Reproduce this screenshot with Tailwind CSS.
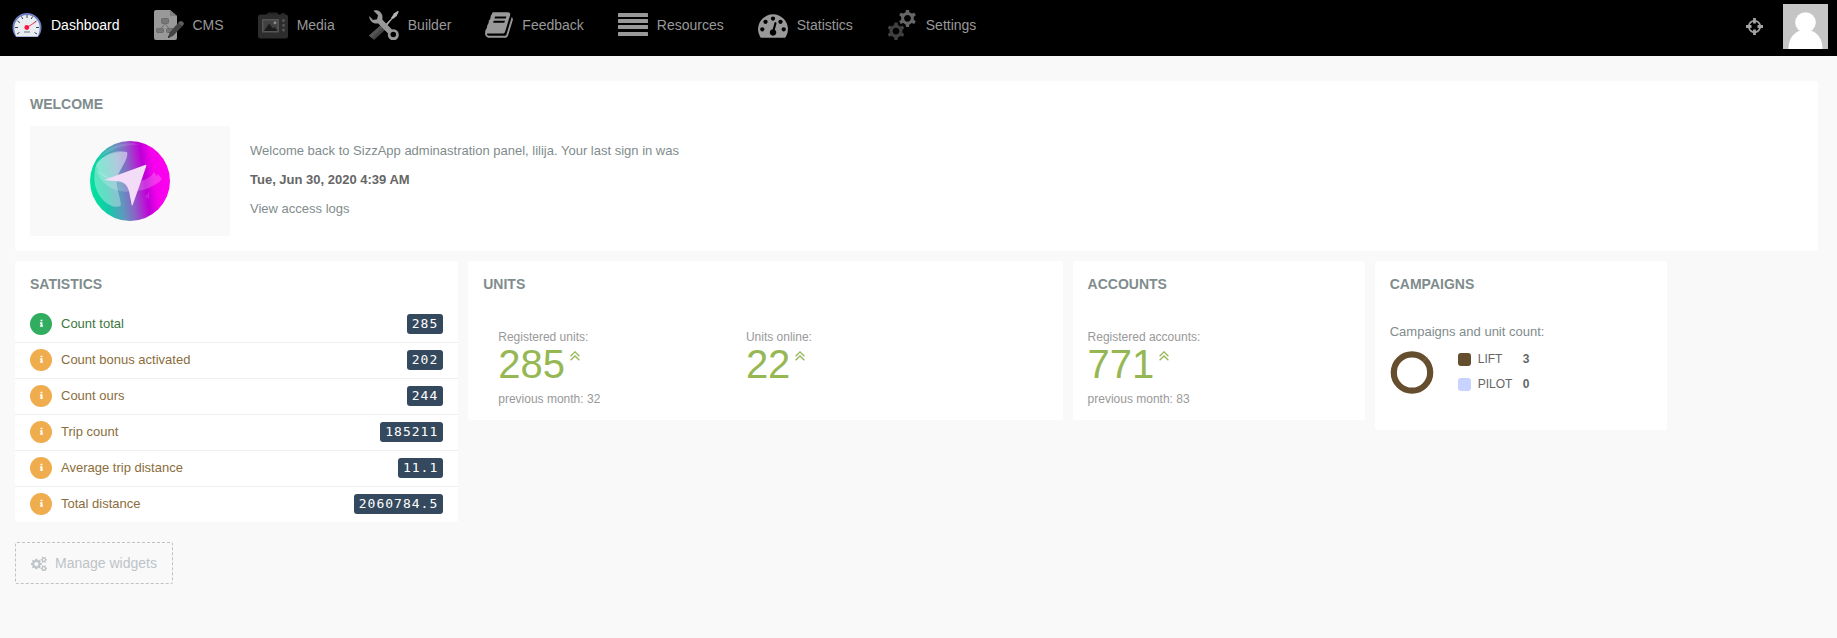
<!DOCTYPE html>
<html lang="en">
<head>
<meta charset="utf-8">
<meta name="viewport" content="width=device-width, initial-scale=1">
<title>Dashboard</title>
<script src="https://cdn.jsdelivr.net/npm/@tailwindcss/browser@4"></script>
</head>
<body class="min-h-screen bg-[#f9f9f9] font-['Liberation_Sans',Arial,sans-serif] text-[13px] text-[#7f8c8d]">

<header class="flex h-14 items-start justify-between bg-black pr-[9px] pl-3">
  <nav class="flex h-[50px] items-center gap-[34px] text-sm text-[#999]" aria-label="Main">
    <a href="#" class="flex items-center gap-[9px] text-white" aria-current="page">
      <svg class="size-[30px]" viewBox="0 0 30 30" aria-hidden="true">
        <path d="M4 27C1.500 24 .5 21 .5 17.500a14.500 14.500 0 0 1 29 0c0 3.500-1 6.500-3.500 9.500z" fill="#6f7fc4"/>
        <path d="M4.500 26.500C3 24 2.300 21 2.300 17.800a12.700 12.700 0 0 1 25.400 0c0 3.200-.7 6.200-2.200 8.700z" fill="#e9edf1"/>
        <g stroke="#37474f" stroke-width="1"><path d="M15 5v3M9.500 6.500l1.200 2.500M20.500 6.500L19.300 9M5.500 11l2.300 1.600M24.500 11l-2.300 1.600M3 17.500h3M24 17.500h3M5 24l2.500-1.500M25 24l-2.500-1.500"/></g>
        <path d="M15 17.500L23.500 12" stroke="#f8315c" stroke-width="1"/>
        <circle cx="14.800" cy="17.500" r="2.400" fill="#ff1245"/>
        <path d="M12 22h6" stroke="#90a4ae" stroke-width="1.600"/>
      </svg>
      Dashboard
    </a>
    <a href="#" class="flex items-center gap-[9px]">
      <svg class="size-[30px]" viewBox="0 0 30 30" aria-hidden="true">
        <path d="M2 0h14l7 6v22a2 2 0 0 1-2 2H2a2 2 0 0 1-2-2V2a2 2 0 0 1 2-2z" fill="#999"/>
        <path d="M16 0l7 6h-7z" fill="#808080"/>
        <g fill="#777" stroke="#666" stroke-width=".8"><rect x="7.500" y="8.500" width="7" height="5" rx="1"/><rect x="2.500" y="18.500" width="7" height="4" rx="1"/><rect x="12.500" y="18.500" width="7" height="4" rx="1"/><path d="M11 13.500l-4 5M11 13.500l4 5" fill="none"/></g>
        <path d="M14 28l1.600-5.500L24 13l4 3.500-9 9.500z" fill="#444"/>
        <path d="M24 13l1.500-1.500q1.500-1.200 3 0t1.500 2.500L28 16.500z" fill="#5d5d5d"/>
        <path d="M14 28l.7-2.300 1.600 1.400z" fill="#222"/>
      </svg>
      CMS
    </a>
    <a href="#" class="flex items-center gap-[9px]">
      <svg class="size-[30px]" viewBox="0 0 30 30" aria-hidden="true">
        <path d="M8 5l2-2.500h9L21 5z" fill="#252525"/>
        <rect x="23" y="3" width="4" height="3" rx="1" fill="#252525"/>
        <rect x="0" y="4.500" width="30" height="24" rx="2.500" fill="#2d2d2d"/>
        <rect x="4" y="9" width="17" height="13.500" fill="#555"/>
        <rect x="5.500" y="10.500" width="14" height="10.500" fill="#424242"/>
        <path d="M6 21l5-7.500 4 5 1.500-1.500 3 4z" fill="#1b1b1b"/>
        <circle cx="17" cy="12.800" r="1.500" fill="#888"/>
        <g fill="#555"><circle cx="25.500" cy="10.500" r="1.500"/><circle cx="25.500" cy="15.300" r="1.500"/><circle cx="25.500" cy="20" r="1.500"/></g>
      </svg>
      Media
    </a>
    <a href="#" class="flex items-center gap-[9px]">
      <svg class="size-[30px]" viewBox="0 0 30 30" aria-hidden="true">
        <path d="M12 15l5 4L5 30l-5-4.500z" fill="#444"/>
        <path d="M12 15l2.500 2L2.500 28 0 25.500z" fill="#555"/>
        <path d="M15 16L24 6.500l1-3L29 1l.8.8L27.500 6l-3 1.500L17 17z" fill="#aaa"/>
        <path d="M22 8L25 3.500 29.500.8 27.500 6 24 9z" fill="#b3b3b3"/>
        <path d="M4.500.8C8.500-.8 13.500 2 13.500 7.500c0 1 0 1.500-.3 2l9.800 10a5.500 5.500 0 1 1-4 4L9 13.200C5 14.500 0 11 .3 6l3.700 4 4-.8 1-4z" fill="#999"/>
        <circle cx="24.300" cy="24.500" r="2.800" fill="#000"/>
      </svg>
      Builder
    </a>
    <a href="#" class="flex items-center gap-[9px]">
      <svg class="h-[30px] w-7" viewBox="64 0 1672 1792" fill="currentColor" aria-hidden="true"><path d="M1703 478q40 57 18 129l-275 906q-19 64-76.500 107.500t-122.500 43.500h-923q-77 0-148.500-53.500t-99.500-131.500q-24-67-2-127 0-4 3-27t4-37q1-8-3-21.500t-3-19.500q2-11 8-21t16.500-23.500 16.500-23.500q23-38 45-91.500t30-91.500q3-10 .5-30t-.5-28q3-11 17-28t17-23q21-36 42-92t25-90q1-9-2.500-32t.5-28q4-13 22-30.500t22-22.500q19-26 42.500-84.500t27.500-96.500q1-8-3-25.500t-2-26.500q2-8 9-18t18-23 17-21q8-12 16.500-30.500t15-35 16-36 19.500-32 26.500-23.500 36-11.500 47.500 5.500l-1 3q38-9 51-9h761q74 0 114 56t18 130l-274 906q-36 119-71.500 153.500t-128.500 34.500h-869q-27 0-38 15-11 16-1 43 24 70 144 70h923q29 0 56-15.500t35-41.500l300-987q7-22 5-57 38 15 59 43zm-1064 2q-4 13 2 22.500t20 9.500h608q13 0 25.500-9.500t16.500-22.500l21-64q4-13-2-22.500t-20-9.500h-608q-13 0-25.500 9.500t-16.500 22.500zm-83 256q-4 13 2 22.500t20 9.500h608q13 0 25.500-9.500t16.500-22.500l21-64q4-13-2-22.500t-20-9.500h-608q-13 0-25.500 9.500t-16.500 22.500z"/></svg>
      Feedback
    </a>
    <a href="#" class="flex items-center gap-[9px]">
      <svg class="size-[30px]" viewBox="0 0 30 30" fill="currentColor" aria-hidden="true"><rect y="3" width="30" height="4" rx=".6"/><rect y="9" width="30" height="4" rx=".6"/><rect y="15" width="30" height="4" rx=".6"/><rect y="22" width="30" height="4" rx=".6"/></svg>
      Resources
    </a>
    <a href="#" class="flex items-center gap-[9px]">
      <svg class="size-[30px]" viewBox="0 0 1792 1792" fill="currentColor" aria-hidden="true"><path d="M384 1152q0-53-37.500-90.500t-90.500-37.500-90.500 37.500-37.500 90.500 37.500 90.500 90.500 37.500 90.500-37.500 37.500-90.500zm192-448q0-53-37.500-90.500t-90.500-37.500-90.500 37.500-37.500 90.500 37.500 90.500 90.500 37.500 90.500-37.500 37.500-90.500zm428 481l101-382q6-26-7.500-48.500t-38.500-29.500-48 6.500-30 39.500l-101 382q-60 5-107 43.500t-63 98.500q-20 77 20 146t117 89 146-20 89-117q16-60-6-117t-72-91zm660-33q0-53-37.500-90.500t-90.500-37.500-90.500 37.500-37.500 90.500 37.500 90.500 90.500 37.500 90.500-37.500 37.500-90.500zm-640-640q0-53-37.500-90.500t-90.500-37.500-90.500 37.500-37.500 90.500 37.500 90.500 90.500 37.500 90.500-37.500 37.500-90.500zm448 192q0-53-37.500-90.500t-90.500-37.500-90.500 37.500-37.500 90.500 37.500 90.500 90.500 37.500 90.500-37.500 37.500-90.500zm320 448q0 261-141 483-19 29-54 29h-1402q-35 0-54-29-141-221-141-483 0-182 71-348t191-286 286-191 348-71 348 71 286 191 191 286 71 348z"/></svg>
      Statistics
    </a>
    <a href="#" class="flex items-center gap-[9px]">
      <svg class="size-[30px]" viewBox="0 0 30 30" aria-hidden="true">
        <defs>
          <g id="gear">
            <circle r="4.900" fill="none" stroke-width="3"/>
            <g stroke="none"><path id="tooth" d="M-2-5.500L-1.500-8.700h3L2-5.500z"/><use href="#tooth" transform="rotate(60)"/><use href="#tooth" transform="rotate(120)"/><use href="#tooth" transform="rotate(180)"/><use href="#tooth" transform="rotate(240)"/><use href="#tooth" transform="rotate(300)"/></g>
          </g>
        </defs>
        <use href="#gear" x="9" y="21.200" fill="#404040" stroke="#404040"/>
        <use href="#gear" x="20.500" y="8.300" fill="#666" stroke="#666"/>
      </svg>
      Settings
    </a>
  </nav>
  <div class="flex items-center gap-5 pt-1">
    <button type="button" aria-label="Locate" class="text-[#a3a3a3]">
      <svg class="size-[17px]" viewBox="0 0 17 17" fill="none" stroke="currentColor" aria-hidden="true"><circle cx="8.500" cy="8.500" r="5.700" stroke-width="1.700"/><path d="M8.500 0v5.500M8.500 11.500V17M0 8.500h5.500M11.500 8.500H17" stroke-width="2.800"/></svg>
    </button>
    <button type="button" aria-label="Account">
      <svg class="size-[45px]" viewBox="0 0 45 45" aria-hidden="true"><rect width="45" height="45" fill="#c5c5c5"/><g fill="#fff"><circle cx="22.500" cy="18.500" r="10.300"/><path d="M5.500 45c0-10 4.500-15.500 10.500-18h13c6 2.500 10.500 8 10.500 18z"/></g></svg>
    </button>
  </div>
</header>

<main class="pt-[25px] pr-[19px] pb-10 pl-[15px]">
  <div class="grid grid-cols-12 items-start gap-[10px]">

    <section class="col-span-12 rounded-[3px] bg-white px-[15px] pt-[13px] pb-[15px]">
      <h2 class="text-sm leading-5 font-bold">WELCOME</h2>
      <div class="mt-3 flex gap-5">
        <div class="flex h-[110px] w-[200px] items-center justify-center bg-[#f9f9f9]">
          <svg class="size-20" viewBox="0 0 80 80" role="img" aria-label="SizzApp">
            <defs>
              <linearGradient id="orb" x1="0" y1=".55" x2="1" y2=".4">
                <stop offset="0" stop-color="#00e59c"/><stop offset=".18" stop-color="#14c9a8"/><stop offset=".36" stop-color="#5f98bd"/><stop offset=".5" stop-color="#8a62c6"/><stop offset=".62" stop-color="#b41ed2"/><stop offset=".68" stop-color="#bd00d6"/><stop offset=".8" stop-color="#f400ec"/><stop offset="1" stop-color="#ff00f0"/>
              </linearGradient>
              <clipPath id="disc"><circle cx="40" cy="40" r="40"/></clipPath>
            </defs>
            <g clip-path="url(#disc)">
              <rect width="80" height="80" fill="url(#orb)"/>
              <path d="M7 19C18 4 34-1 52 4c-9-1-30 1-45 15z" fill="#fff" opacity=".12"/>
              <path d="M5 28C8 16 24 8 37 11c2 5-5 15-9 23-4 9 2 19 3 30-3 4-12 1-17-4C5 51 3 40 5 28z" fill="#fff" opacity=".34"/>
              <path d="M6 24c2-8 18-14 31-13 1 4-1 8-4 13-4 7-6 10-6 14C17 40 9 34 6 24z" fill="#fff" opacity=".24"/>
              <path d="M29 50C17 47 9 39 6 28c10 9 24 14 36 13 9 0 15-3 19-6l3-4 3 4 1-2 4 5c-7 9-26 15-43 12z" fill="#fff" opacity=".2"/>
              <path d="M55 56l4-5v7z" fill="#fff" opacity=".12"/>
              <path d="M14 39L55 24q2-1 1 2L43 63q-1 3-1.500 0L39 50q-2-8-9-9.500z" fill="#f3dcf8"/>
            </g>
          </svg>
        </div>
        <div class="flex flex-col items-start gap-[9px] pt-[15px] leading-5">
          <p>Welcome back to SizzApp adminastration panel, lilija. Your last sign in was</p>
          <p class="font-bold text-[#666]">Tue, Jun 30, 2020 4:39 AM</p>
          <a href="#">View access logs</a>
        </div>
      </div>
    </section>

    <section class="col-span-3 rounded-[3px] bg-white pt-[13px]">
      <h2 class="px-[15px] text-sm leading-5 font-bold">SATISTICS</h2>
      <svg class="hidden" aria-hidden="true"><symbol id="info" viewBox="0 0 1792 1792"><path d="M1216 1344v128q0 26-19 45t-45 19h-512q-26 0-45-19t-19-45v-128q0-26 19-45t45-19h64v-384h-64q-26 0-45-19t-19-45v-128q0-26 19-45t45-19h384q26 0 45 19t19 45v576h64q26 0 45 19t19 45zm-128-1152v192q0 26-19 45t-45 19h-256q-26 0-45-19t-19-45v-192q0-26 19-45t45-19h256q26 0 45 19t19 45z"/></symbol></svg>
      <ul class="mt-3 text-[#8a6d3b]">
        <li class="flex h-9 items-center border-t border-transparent px-[15px] pb-[2px] text-[#3c763d]">
          <span class="mr-[9px] flex size-[22px] items-center justify-center rounded-full bg-[#31ad5f] text-white"><svg class="size-[9px] fill-current"><use href="#info"/></svg></span>Count total
          <span class="ml-auto rounded-[3px] bg-[#34495e] px-[5px] font-['DejaVu_Sans_Mono',monospace] leading-5 tracking-[1px] text-white">285</span>
        </li>
        <li class="flex h-9 items-center border-t border-[#eee] px-[15px] pb-[2px]">
          <span class="mr-[9px] flex size-[22px] items-center justify-center rounded-full bg-[#f0ad4e] text-white"><svg class="size-[9px] fill-current"><use href="#info"/></svg></span>Count bonus activated
          <span class="ml-auto rounded-[3px] bg-[#34495e] px-[5px] font-['DejaVu_Sans_Mono',monospace] leading-5 tracking-[1px] text-white">202</span>
        </li>
        <li class="flex h-9 items-center border-t border-[#eee] px-[15px] pb-[2px]">
          <span class="mr-[9px] flex size-[22px] items-center justify-center rounded-full bg-[#f0ad4e] text-white"><svg class="size-[9px] fill-current"><use href="#info"/></svg></span>Count ours
          <span class="ml-auto rounded-[3px] bg-[#34495e] px-[5px] font-['DejaVu_Sans_Mono',monospace] leading-5 tracking-[1px] text-white">244</span>
        </li>
        <li class="flex h-9 items-center border-t border-[#eee] px-[15px] pb-[2px]">
          <span class="mr-[9px] flex size-[22px] items-center justify-center rounded-full bg-[#f0ad4e] text-white"><svg class="size-[9px] fill-current"><use href="#info"/></svg></span>Trip count
          <span class="ml-auto rounded-[3px] bg-[#34495e] px-[5px] font-['DejaVu_Sans_Mono',monospace] leading-5 tracking-[1px] text-white">185211</span>
        </li>
        <li class="flex h-9 items-center border-t border-[#eee] px-[15px] pb-[2px]">
          <span class="mr-[9px] flex size-[22px] items-center justify-center rounded-full bg-[#f0ad4e] text-white"><svg class="size-[9px] fill-current"><use href="#info"/></svg></span>Average trip distance
          <span class="ml-auto rounded-[3px] bg-[#34495e] px-[5px] font-['DejaVu_Sans_Mono',monospace] leading-5 tracking-[1px] text-white">11.1</span>
        </li>
        <li class="flex h-9 items-center border-t border-[#eee] px-[15px] pb-[2px]">
          <span class="mr-[9px] flex size-[22px] items-center justify-center rounded-full bg-[#f0ad4e] text-white"><svg class="size-[9px] fill-current"><use href="#info"/></svg></span>Total distance
          <span class="ml-auto rounded-[3px] bg-[#34495e] px-[5px] font-['DejaVu_Sans_Mono',monospace] leading-5 tracking-[1px] text-white">2060784.5</span>
        </li>
      </ul>
    </section>

    <section class="col-span-4 rounded-[3px] bg-white pt-[13px] pb-3">
      <h2 class="px-[15px] text-sm leading-5 font-bold">UNITS</h2>
      <div class="mt-9 flex text-xs text-[#999]">
        <div class="w-5/12 pl-[30px]">
          <p class="leading-[14px]">Registered units:</p>
          <p class="flex gap-[5px] text-[40px] leading-10 text-[#95b754]">285<svg class="mt-[7px] h-[10px] w-[10px]" viewBox="0 0 10 10" fill="none" stroke="currentColor" stroke-width="1.300" aria-hidden="true"><path d="M.6 5.200L5 .9l4.400 4.300M.6 9.300L5 5l4.400 4.300"/></svg></p>
          <p class="mt-[6px] leading-[18px]">previous month: 32</p>
        </div>
        <div class="w-5/12 pl-[30px]">
          <p class="leading-[14px]">Units online:</p>
          <p class="flex gap-[5px] text-[40px] leading-10 text-[#95b754]">22<svg class="mt-[7px] h-[10px] w-[10px]" viewBox="0 0 10 10" fill="none" stroke="currentColor" stroke-width="1.300" aria-hidden="true"><path d="M.6 5.200L5 .9l4.400 4.300M.6 9.300L5 5l4.400 4.300"/></svg></p>
        </div>
      </div>
    </section>

    <section class="col-span-2 rounded-[3px] bg-white px-[15px] pt-[13px] pb-3">
      <h2 class="text-sm leading-5 font-bold">ACCOUNTS</h2>
      <div class="mt-9 text-xs text-[#999]">
        <p class="leading-[14px]">Registered accounts:</p>
        <p class="flex gap-[5px] text-[40px] leading-10 text-[#95b754]">771<svg class="mt-[7px] h-[10px] w-[10px]" viewBox="0 0 10 10" fill="none" stroke="currentColor" stroke-width="1.300" aria-hidden="true"><path d="M.6 5.200L5 .9l4.400 4.300M.6 9.300L5 5l4.400 4.300"/></svg></p>
        <p class="mt-[6px] leading-[18px]">previous month: 83</p>
      </div>
    </section>

    <section class="col-span-2 rounded-[3px] bg-white px-[15px] pt-[13px] pb-[33px]">
      <h2 class="text-sm leading-5 font-bold">CAMPAIGNS</h2>
      <p class="mt-[29px] leading-[18px]">Campaigns and unit count:</p>
      <div class="mt-[6px] flex items-center gap-6">
        <svg class="size-11" viewBox="0 0 44 44" role="img" aria-label="LIFT 3, PILOT 0"><circle cx="22" cy="22.500" r="18.200" fill="none" stroke="#644e2e" stroke-width="6.200"/><path d="M33 11.500l4-4" stroke="#8a775c" stroke-width=".8"/></svg>
        <dl class="grid grid-cols-[35px_auto] gap-x-[10px] text-xs leading-[25px] text-[#666]">
          <dt class="flex items-center gap-[7px]"><span class="size-[13px] shrink-0 rounded-[3px] bg-[#644e2e]"></span>LIFT</dt><dd class="pl-5 font-bold">3</dd>
          <dt class="flex items-center gap-[7px]"><span class="size-[13px] shrink-0 rounded-[3px] bg-[#c8d3ff]"></span>PILOT</dt><dd class="pl-5 font-bold">0</dd>
        </dl>
      </div>
    </section>
  </div>

  <button type="button" class="mt-5 flex h-[42px] items-center gap-2 rounded-[2px] border border-dashed border-[#bdc3c7] px-[15px] text-sm text-[#bdc3c7]">
    <svg class="h-[15px] w-4" viewBox="0 0 1920 1792" fill="currentColor" aria-hidden="true">
      <path d="M896 960q0-106-75-181t-181-75-181 75-75 181 75 181 181 75 181-75 75-181zm384-91v185q0 10-7 19.500t-16 10.500l-155 24q-11 35-32 76 34 48 90 115 7 11 7 20 0 12-7 19-23 30-82.500 89.500t-78.500 59.500q-11 0-21-7l-115-90q-37 19-77 31-11 108-23 155-7 24-30 24h-186q-11 0-20-7.500t-10-17.500l-23-153q-34-10-75-31l-118 89q-7 7-20 7-11 0-21-8-144-133-144-160 0-9 7-19 10-14 41-53t47-61q-23-44-35-82l-152-24q-10-1-17-9.500t-7-19.500v-185q0-10 7-19.500t16-10.500l155-24q11-35 32-76-34-48-90-115-7-11-7-20 0-12 7-20 22-30 82-89t79-59q11 0 21 7l115 90q34-18 77-32 11-108 23-154 7-24 30-24h186q11 0 20 7.500t10 17.500l23 153q34 10 75 31l118-89q8-7 20-7 11 0 21 8 144 133 144 160 0 8-7 19-12 16-42 54t-45 60q23 48 34 82l152 23q10 2 17 10.500t7 19.500z"/>
      <path id="cog-small" d="M1664 1472q0-52-38-90t-90-38-90 38-38 90q0 53 37.500 90.500t90.500 37.500 90.500-37.500 37.500-90.500zm256-70v140q0 16-149 31-12 27-30 52 51 113 51 138 0 4-4 7-122 71-124 71-8 0-46-47t-52-68q-20 2-30 2t-30-2q-14 21-52 68t-46 47q-2 0-124-71-4-3-4-7 0-25 51-138-18-25-30-52-149-15-149-31v-140q0-16 149-31 13-29 30-52-51-113-51-138 0-4 4-7 4-2 35-20t59-34 30-16q8 0 46 46.500t52 67.500q20-2 30-2t30 2q51-71 92-112l6-2q4 0 124 70 4 3 4 7 0 25-51 138 17 23 30 52 149 15 149 31z"/>
      <use href="#cog-small" y="-1024"/>
    </svg>
    Manage widgets
  </button>
</main>
</body>
</html>
